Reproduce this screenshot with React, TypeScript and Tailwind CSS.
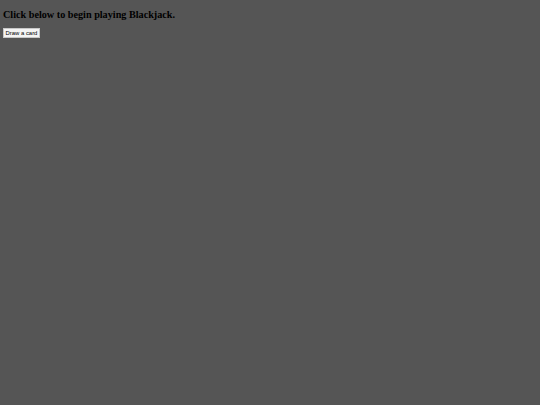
export default function App() {
  return (
    <div className="min-h-screen w-full bg-[#555555] px-[3px] pt-[8px] font-['Liberation_Serif',serif]">
      <h3 className="text-[10.2px] font-bold leading-[14px] text-black">Click below to begin playing Blackjack.</h3>
      <button className="mt-[6px] h-[10px] w-[37px] justify-center bg-[#f4f4f4] border border-[#c8c8c8] text-[5.9px] leading-[7px] text-black flex items-center font-['Liberation_Sans',sans-serif]">
        Draw a card
      </button>
    </div>
  );
}
